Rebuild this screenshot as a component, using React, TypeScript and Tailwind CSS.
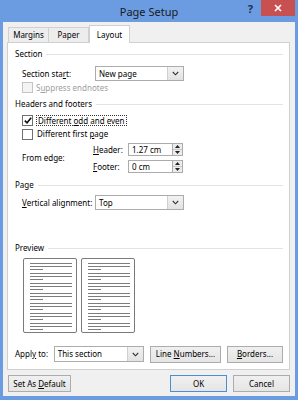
import React from "react";

const FONT = { fontFamily: '"Noto Sans", "Open Sans", Arial, sans-serif' };

const U = ({ children }: { children: React.ReactNode }) => <span className="underline underline-offset-1">{children}</span>;

const Chevron = () => (
  <svg width="7" height="5" viewBox="0 0 7 5" className="block">
    <path d="M0.8 1 L3.5 3.8 L6.2 1" fill="none" stroke="#333" strokeWidth="1.1" />
  </svg>
);

const Combo = ({ value, w, h }: { value: string; w: string; h: string }) => (
  <div className={`${w} ${h} flex border border-[#acacac] bg-white`}>
    <div className="flex-1 flex items-center pl-[3px] text-[8px] text-black">{value}</div>
    <div className="w-[16px] flex items-center justify-center border-l border-[#d0d0d0] bg-gradient-to-b from-[#f2f2f2] to-[#e2e2e2]">
      <Chevron />
    </div>
  </div>
);

const Spin = ({ value }: { value: string }) => (
  <div className="w-[55px] h-[13px] flex">
    <div className="flex-1 flex items-center pl-[3px] border border-[#acacac] bg-white text-[8px]">{value}</div>
    <div className="w-[10px] flex flex-col border border-l-0 border-[#acacac] bg-[#ececec]">
      <div className="flex-1 flex items-center justify-center border-b border-[#c8c8c8]">
        <svg width="5" height="3" viewBox="0 0 5 3"><path d="M0 3 L2.5 0 L5 3 Z" fill="#222" /></svg>
      </div>
      <div className="flex-1 flex items-center justify-center">
        <svg width="5" height="3" viewBox="0 0 5 3"><path d="M0 0 L2.5 3 L5 0 Z" fill="#222" /></svg>
      </div>
    </div>
  </div>
);

const Check = ({ checked, disabled }: { checked?: boolean; disabled?: boolean }) => (
  <div
    className={`w-[11px] h-[11px] flex items-center justify-center border ${
      disabled ? "border-[#c4c4c4] bg-[#f4f4f4]" : "border-[#707070] bg-white"
    }`}
  >
    {checked && (
      <svg width="8" height="7" viewBox="0 0 8 7">
        <path d="M0.8 3.6 L3 5.8 L7.2 0.8" fill="none" stroke="#111" strokeWidth="1.6" />
      </svg>
    )}
  </div>
);

const GroupTitle = ({ children, mt }: { children: React.ReactNode; mt: string }) => (
  <div className={`${mt} h-[12px] flex items-center gap-[4px] text-[8px] text-black`}>
    <span>{children}</span>
    <div className="flex-1 h-px bg-[#e3e3e3]" />
  </div>
);

const Btn = ({ children, w, primary }: { children: React.ReactNode; w: string; primary?: boolean }) => (
  <div
    className={`${w} h-[17px] flex items-center justify-center text-[8px] text-black border bg-gradient-to-b from-[#f0f0f0] to-[#e5e5e5] ${
      primary ? "border-[#4a90d0]" : "border-[#acacac]"
    }`}
  >
    <span>{children}</span>
  </div>
);

const PreviewPage = () => (
  <div className="w-[54px] h-[75px] border border-[#7a7a7a] rounded-[2px] bg-white pt-[4px] pl-[6px] pr-[4px] flex flex-col gap-[3px]">
    {Array.from({ length: 7 }).map((_, i) => (
      <div key={i} className="flex flex-col gap-[2px]">
        <div className="h-px bg-[#7d7d7d]" />
        <div className="h-px bg-[#7d7d7d]" />
        <div className="h-px w-[13px] bg-[#7d7d7d]" />
      </div>
    ))}
  </div>
);

export default function App() {
  return (
    <div className="w-[298px] h-[400px] bg-[#6b9ce2] flex flex-col px-[3px] pb-[4px]" style={FONT}>
      {/* Title bar */}
      <div className="h-[22px] flex items-start">
        <div className="flex-1" />
        <div className="pt-[4px] text-[11px] text-[#1a1a1a]">Page Setup</div>
        <div className="flex-1 flex justify-end items-start">
          <span className="mt-[1px] mr-[8px] text-[11px] font-bold text-[#1f3050]">?</span>
          <div className="w-[34px] h-[16px] bg-[#c75050] flex items-center justify-center">
            <svg width="8" height="8" viewBox="0 0 8 8">
              <path d="M1 1 L7 7 M7 1 L1 7" stroke="white" strokeWidth="1.6" />
            </svg>
          </div>
        </div>
      </div>

      {/* Client */}
      <div className="flex-1 bg-[#f0f0f0] flex flex-col pl-[4px] pr-[5px]">
        {/* Tabs */}
        <div className="h-[20px] flex items-end pl-[1px] text-[8px] text-black">
          <div className="w-[41px] h-[15px] flex items-center justify-center bg-[#ededed] border border-b-0 border-[#d0d0d0]">Margins</div>
          <div className="w-[40px] h-[15px] flex items-center justify-center bg-[#ededed] border border-b-0 border-l-0 border-[#d0d0d0]">Paper</div>
          <div className="w-[41px] h-[18px] -mb-px relative flex items-center justify-center bg-white border border-b-0 border-[#d0d0d0]">Layout</div>
        </div>

        {/* Panel */}
        <div className="h-[328px] bg-white border border-[#d0d0d0] flex flex-col pl-[7px] pr-[6px] text-[8px] text-black">
          <GroupTitle mt="mt-[5px]">Section</GroupTitle>

          <div className="mt-[6px] h-[15px] flex items-center pl-[7px]">
            <span className="w-[73px]">Section sta<U>r</U>t:</span>
            <Combo value="New page" w="w-[89px]" h="h-[15px]" />
          </div>

          <div className="mt-[1px] h-[11px] flex items-center gap-[3px] pl-[7px] text-[#a0a0a0]">
            <Check disabled />
            <span>S<U>u</U>ppress endnotes</span>
          </div>

          <GroupTitle mt="mt-[5px]">Headers and footers</GroupTitle>

          <div className="mt-[4px] h-[12px] flex items-center gap-[3px] pl-[7px]">
            <Check checked />
            <span className="border border-dotted border-[#333] px-px leading-[9px]">Different <U>o</U>dd and even</span>
          </div>

          <div className="mt-[2px] h-[12px] flex items-center gap-[3px] pl-[7px]">
            <Check />
            <span className="pl-px">Different first <U>p</U>age</span>
          </div>

          <div className="mt-[3px] h-[30px] flex items-center pl-[7px]">
            <span className="w-[71px]">From edge:</span>
            <div className="flex flex-col gap-[4px]">
              <div className="flex items-center">
                <span className="w-[35px]"><U>H</U>eader:</span>
                <Spin value="1.27 cm" />
              </div>
              <div className="flex items-center">
                <span className="w-[35px]"><U>F</U>ooter:</span>
                <Spin value="0 cm" />
              </div>
            </div>
          </div>

          <GroupTitle mt="mt-[6px]">Page</GroupTitle>

          <div className="mt-[4px] h-[15px] flex items-center pl-[7px]">
            <span className="w-[73px]"><U>V</U>ertical alignment:</span>
            <Combo value="Top" w="w-[89px]" h="h-[15px]" />
          </div>

          <GroupTitle mt="mt-[32px]">Preview</GroupTitle>

          <div className="mt-[4px] flex gap-[4px] pl-[8px]">
            <PreviewPage />
            <PreviewPage />
          </div>

          <div className="mt-[13px] h-[16px] flex items-center">
            <span className="w-[39px]">Appl<U>y</U> to:</span>
            <Combo value="This section" w="w-[91px]" h="h-[16px]" />
            <div className="ml-[6px]">
              <Btn w="w-[71px]">Line <U>N</U>umbers...</Btn>
            </div>
            <div className="ml-[6px]">
              <Btn w="w-[56px]"><U>B</U>orders...</Btn>
            </div>
          </div>
        </div>

        {/* Bottom buttons */}
        <div className="mt-[5px] flex items-center pl-[1px]">
          <Btn w="w-[63px]">Set As <U>D</U>efault</Btn>
          <div className="flex-1" />
          <Btn w="w-[57px]" primary>OK</Btn>
          <div className="ml-[6px]">
            <Btn w="w-[57px]">Cancel</Btn>
          </div>
        </div>
      </div>
    </div>
  );
}
